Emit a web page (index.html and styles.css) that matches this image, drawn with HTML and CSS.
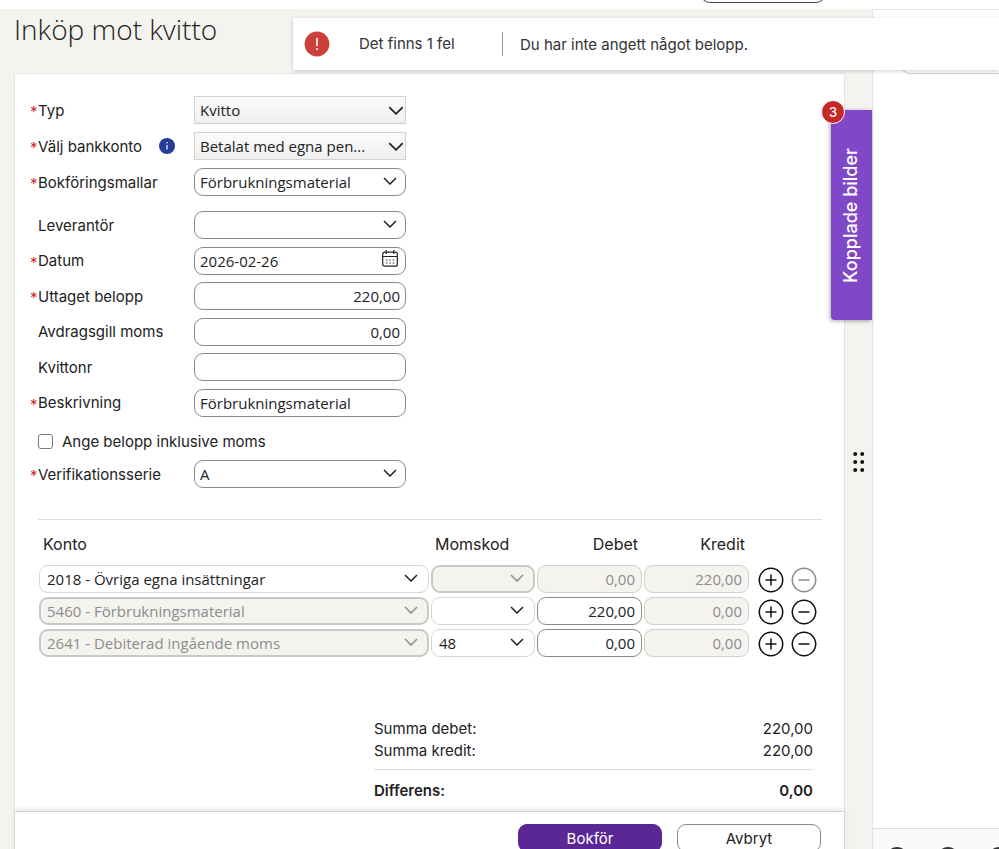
FILE: index.html
```html
<!DOCTYPE html>
<html lang="sv">
<head>
    <meta charset="UTF-8">
    <meta name="viewport" content="width=device-width, initial-scale=1.0">
    <title>Inköp mot kvitto</title>
    <link rel="stylesheet" href="styles.css">
</head>
<body>
    <!-- Shared icons -->
    <svg class="sprite" aria-hidden="true">
        <symbol id="chevron" viewBox="0 0 14 8"><path d="M1 1l6 6 6-6"/></symbol>
        <symbol id="plus" viewBox="0 0 26 26"><circle cx="13" cy="13" r="11.7"/><path d="M7.5 13h11M13 7.5v11"/></symbol>
        <symbol id="minus" viewBox="0 0 26 26"><circle cx="13" cy="13" r="11.7"/><path d="M7.5 13h11"/></symbol>
    </svg>

    <header class="topbar">
        <button class="topbar-btn" aria-label="Meny"></button>
    </header>

    <div class="alert" role="alert">
        <svg class="alert-icon" viewBox="0 0 26 26"><circle cx="13" cy="13" r="12.4" fill="#cc403b"/><path d="M13 7.5v7" stroke="#fff" stroke-width="1.6" stroke-linecap="round"/><circle cx="13" cy="18" r="1" fill="#fff"/></svg>
        <span class="alert-title">Det finns 1 fel</span>
        <span class="alert-text">Du har inte angett något belopp.</span>
    </div>

    <div class="layout">
        <main class="workspace">
            <h1>Inköp mot kvitto</h1>
            <form class="card">
                <div class="card-body">
                    <div class="fields">
                        <div class="row required">
                            <label for="typ">Typ</label>
                            <div class="select flat">
                                <select id="typ"><option>Kvitto</option></select>
                                <svg class="chevron"><use href="#chevron"/></svg>
                            </div>
                        </div>
                        <div class="row required">
                            <label for="bank">Välj bankkonto</label>
                            <svg class="info" viewBox="0 0 16 16"><circle cx="8" cy="8" r="8" fill="#263c96"/><path d="M8 7v4.5" stroke="#fff" stroke-width="1.2"/><circle cx="8" cy="4.8" r=".8" fill="#fff"/></svg>
                            <div class="select flat">
                                <select id="bank"><option>Betalat med egna pen...</option></select>
                                <svg class="chevron"><use href="#chevron"/></svg>
                            </div>
                        </div>
                        <div class="row required">
                            <label for="mall">Bokföringsmallar</label>
                            <div class="select">
                                <select id="mall"><option>Förbrukningsmaterial</option></select>
                                <svg class="chevron"><use href="#chevron"/></svg>
                            </div>
                        </div>
                    </div>

                    <div class="fields details">
                        <div class="row">
                            <label for="lev">Leverantör</label>
                            <div class="select">
                                <select id="lev"><option></option></select>
                                <svg class="chevron"><use href="#chevron"/></svg>
                            </div>
                        </div>
                        <div class="row required">
                            <label for="datum">Datum</label>
                            <div class="select">
                                <input type="text" id="datum" value="2026-02-26">
                                <svg class="calendar" viewBox="0 0 16 17"><rect x=".7" y="2.2" width="14.6" height="14" rx="2"/><path d="M.7 6.5h14.6M4.2 0v4M11.8 0v4"/><path d="M4 10h8.4M4 13h8.4" stroke-dasharray="1.4 2"/></svg>
                            </div>
                        </div>
                        <div class="row required">
                            <label for="uttag">Uttaget belopp</label>
                            <input type="text" id="uttag" class="amount" value="220,00">
                        </div>
                        <div class="row">
                            <label for="moms">Avdragsgill moms</label>
                            <input type="text" id="moms" class="amount" value="0,00">
                        </div>
                        <div class="row">
                            <label for="nr">Kvittonr</label>
                            <input type="text" id="nr">
                        </div>
                        <div class="row required">
                            <label for="beskr">Beskrivning</label>
                            <input type="text" id="beskr" value="Förbrukningsmaterial">
                        </div>
                    </div>

                    <div class="check">
                        <input type="checkbox" id="inkl">
                        <label for="inkl">Ange belopp inklusive moms</label>
                    </div>

                    <div class="row required">
                        <label for="serie">Verifikationsserie</label>
                        <div class="select">
                            <select id="serie"><option>A</option></select>
                            <svg class="chevron"><use href="#chevron"/></svg>
                        </div>
                    </div>

                    <table class="entries">
                        <colgroup>
                            <col>
                            <col class="col-code">
                            <col class="col-sum">
                            <col class="col-sum">
                            <col class="col-actions">
                        </colgroup>
                        <thead>
                            <tr>
                                <th>Konto</th>
                                <th>Momskod</th>
                                <th class="num">Debet</th>
                                <th class="num">Kredit</th>
                                <td></td>
                            </tr>
                        </thead>
                        <tbody>
                            <tr>
                                <td><div class="select"><select aria-label="Konto"><option>2018 - Övriga egna insättningar</option></select><svg class="chevron"><use href="#chevron"/></svg></div></td>
                                <td><div class="select"><select aria-label="Momskod" disabled><option></option></select><svg class="chevron"><use href="#chevron"/></svg></div></td>
                                <td><input type="text" class="amount" aria-label="Debet" value="0,00" disabled></td>
                                <td><input type="text" class="amount" aria-label="Kredit" value="220,00" disabled></td>
                                <td>
                                    <div class="actions">
                                        <button type="button" aria-label="Lägg till rad"><svg><use href="#plus"/></svg></button>
                                        <button type="button" aria-label="Ta bort rad" disabled><svg><use href="#minus"/></svg></button>
                                    </div>
                                </td>
                            </tr>
                            <tr>
                                <td><div class="select"><select aria-label="Konto" disabled><option>5460 - Förbrukningsmaterial</option></select><svg class="chevron"><use href="#chevron"/></svg></div></td>
                                <td><div class="select"><select aria-label="Momskod"><option></option></select><svg class="chevron"><use href="#chevron"/></svg></div></td>
                                <td><input type="text" class="amount" aria-label="Debet" value="220,00"></td>
                                <td><input type="text" class="amount" aria-label="Kredit" value="0,00" disabled></td>
                                <td>
                                    <div class="actions">
                                        <button type="button" aria-label="Lägg till rad"><svg><use href="#plus"/></svg></button>
                                        <button type="button" aria-label="Ta bort rad"><svg><use href="#minus"/></svg></button>
                                    </div>
                                </td>
                            </tr>
                            <tr>
                                <td><div class="select"><select aria-label="Konto" disabled><option>2641 - Debiterad ingående moms</option></select><svg class="chevron"><use href="#chevron"/></svg></div></td>
                                <td><div class="select"><select aria-label="Momskod"><option>48</option></select><svg class="chevron"><use href="#chevron"/></svg></div></td>
                                <td><input type="text" class="amount" aria-label="Debet" value="0,00"></td>
                                <td><input type="text" class="amount" aria-label="Kredit" value="0,00" disabled></td>
                                <td>
                                    <div class="actions">
                                        <button type="button" aria-label="Lägg till rad"><svg><use href="#plus"/></svg></button>
                                        <button type="button" aria-label="Ta bort rad"><svg><use href="#minus"/></svg></button>
                                    </div>
                                </td>
                            </tr>
                        </tbody>
                    </table>

                    <dl class="totals">
                        <div><dt>Summa debet:</dt><dd>220,00</dd></div>
                        <div><dt>Summa kredit:</dt><dd>220,00</dd></div>
                        <div class="diff"><dt>Differens:</dt><dd>0,00</dd></div>
                    </dl>
                </div>

                <div class="card-footer">
                    <button type="button" class="btn primary">Bokför</button>
                    <button type="button" class="btn">Avbryt</button>
                </div>
            </form>
        </main>

        <div class="gutter">
            <button class="side-tab"><span class="side-label">Kopplade bilder</span><span class="badge">3</span></button>
            <svg class="drag" viewBox="0 0 12 22"><circle cx="2.2" cy="3" r="2"/><circle cx="9.2" cy="3" r="2"/><circle cx="2.2" cy="11" r="2"/><circle cx="9.2" cy="11" r="2"/><circle cx="2.2" cy="19" r="2"/><circle cx="9.2" cy="19" r="2"/></svg>
        </div>

        <aside class="preview">
            <button class="preview-btn" aria-label="Välj bild"></button>
            <div class="preview-tools">
                <button aria-label="Zooma in"><svg viewBox="0 0 24 24"><circle cx="12" cy="12" r="10"/></svg></button>
                <button aria-label="Zooma ut"><svg viewBox="0 0 24 24"><circle cx="12" cy="12" r="10"/></svg></button>
                <button aria-label="Rotera"><svg viewBox="0 0 24 24"><circle cx="12" cy="12" r="10"/></svg></button>
            </div>
        </aside>
    </div>
</body>
</html>
```

FILE: styles.css
```css
* {
    box-sizing: border-box;
}

body {
    margin: 0;
    height: 100vh;
    overflow: hidden;
    display: flex;
    flex-direction: column;
    background: #f4f3ef;
    color: #222;
    font-family: 'Inter', sans-serif;
    font-size: 15px;
    position: relative;
}

button,
input,
select {
    font: inherit;
    color: inherit;
    margin: 0;
}

button {
    cursor: pointer;
}

svg {
    fill: none;
    stroke: none;
}

.sprite {
    position: absolute;
    width: 0;
    height: 0;
}

/* Top bar */
.topbar {
    flex: none;
    height: 9px;
    background: #fff;
    display: flex;
    align-items: flex-end;
    justify-content: flex-end;
    padding: 0 173px 6px 0;
}

.topbar-btn {
    width: 126px;
    height: 32px;
    border: 1px solid #444;
    border-radius: 10px;
    background: #fff;
}

/* Alert */
.alert {
    position: absolute;
    top: 18px;
    left: 293px;
    right: 0;
    z-index: 5;
    display: flex;
    align-items: center;
    padding: 13px 11px;
    background: #fff;
    box-shadow: 0 1px 4px rgba(0, 0, 0, 0.2);
    color: #333;
}

.alert-icon {
    width: 26px;
    height: 26px;
    margin-right: 29px;
}

.alert-title {
    width: 144px;
    line-height: 24px;
    border-right: 1px solid #999;
    margin-right: 17px;
}

/* Layout */
.layout {
    flex: 1;
    min-height: 0;
    display: flex;
}

.workspace {
    flex: 1;
    min-width: 0;
    padding-left: 14px;
}

h1 {
    margin: 0 0 24px;
    font-family: 'Open Sans', sans-serif;
    font-size: 28px;
    font-weight: 350;
    line-height: 40px;
}

.card {
    background: #fff;
    border: 1px solid #e4e4e4;
}

.card-body {
    padding: 22px 22px 9px 23px;
}

/* Form rows */
.fields {
    display: grid;
    gap: 8px;
    margin-bottom: 15px;
}

.details {
    gap: 0;
    align-content: space-between;
    min-height: 206px;
}

.row {
    position: relative;
    display: grid;
    grid-template-columns: 1fr auto 212px;
    align-items: center;
    width: 368px;
}

.row > :last-child {
    grid-column: 3;
}

.required::before {
    content: '*';
    position: absolute;
    left: -8px;
    top: 6px;
    color: #d02c2c;
}

.info {
    width: 16px;
    height: 16px;
    margin-right: 19px;
}

.select {
    position: relative;
}

input[type="text"],
select {
    display: block;
    width: 100%;
    height: 28px;
    padding: 0 5px;
    border: 1px solid #8a8a8a;
    border-radius: 9px;
    background: #fff;
    font-family: 'Open Sans', sans-serif;
    appearance: none;
    outline: none;
}

input.amount {
    text-align: right;
}

.chevron {
    position: absolute;
    right: 9px;
    top: 9px;
    width: 14px;
    height: 8px;
    stroke: #222;
    stroke-width: 1.5;
    pointer-events: none;
}

.flat select {
    border-color: #d0d0d0;
    border-radius: 0;
    background: linear-gradient(#fbfbfb, #efefef);
}

.flat .chevron {
    right: 2px;
    top: 10px;
    width: 16px;
    height: 9px;
}

.calendar {
    position: absolute;
    right: 8px;
    top: 3px;
    width: 16px;
    height: 17px;
    stroke: #222;
    stroke-width: 1.2;
}

.check {
    display: flex;
    align-items: center;
    gap: 9px;
    height: 18px;
    margin-bottom: 10px;
}

.check input {
    width: 15px;
    height: 15px;
    border: 1px solid #777;
    border-radius: 3px;
    background: #fff;
    appearance: none;
}

/* Entry table */
.entries {
    width: 100%;
    margin-top: 31px;
    border-top: 1px solid #ddd;
    border-spacing: 0;
    table-layout: fixed;
}

.col-code {
    width: 106px;
}

.col-sum {
    width: 107px;
}

.col-actions {
    width: 72px;
}

.entries th {
    height: 43px;
    padding: 5px 5px 0;
    font-size: 16px;
    font-weight: 400;
    text-align: left;
}

.entries th.num {
    text-align: right;
}

.entries td {
    padding: 2px 1px;
}

.entries select {
    padding: 0 7px;
    border-color: #d6d6d6;
}

.entries input.amount {
    padding: 0 6px;
}

.entries .chevron {
    right: 11px;
}

.entries select:disabled,
.entries input:disabled {
    background: #f4f3ef;
    color: #8c8c8c;
    opacity: 1;
    border-color: #d0cfcc;
}

.entries select:disabled {
    border: 2px solid #c9c8c4;
    padding: 0 6px;
}

select:disabled + .chevron {
    stroke: #8c8c8c;
}

.actions {
    display: flex;
    gap: 7px;
    padding: 2px 0 0 7px;
}

.actions button {
    width: 26px;
    height: 26px;
    padding: 0;
    border: 0;
    background: none;
}

.actions svg {
    display: block;
    width: 26px;
    height: 26px;
    stroke: #111;
    stroke-width: 1.5;
}

.actions button:disabled svg {
    stroke: #8c8c8c;
}

/* Totals */
.totals {
    width: 439px;
    margin: 59px 9px 0 auto;
    line-height: 22px;
}

.totals div {
    display: flex;
    justify-content: space-between;
}

.totals dd {
    margin: 0;
}

.totals .diff {
    margin-top: 7px;
    padding-top: 10px;
    border-top: 1px solid #ddd;
    font-weight: 600;
}

.card-footer {
    display: flex;
    justify-content: flex-end;
    gap: 15px;
    padding: 12px 23px;
    border-top: 1px solid #d4d4d4;
    box-shadow: 0 -2px 5px rgba(0, 0, 0, 0.1);
}

.btn {
    width: 144px;
    height: 28px;
    padding: 0;
    border: 1px solid #8a8a8a;
    border-radius: 9px;
    background: #fff;
}

.btn.primary {
    border-color: #5a2795;
    background: #5a2795;
    color: #fff;
}

/* Gutter with tab and drag handle */
.gutter {
    position: relative;
    flex: none;
    width: 27px;
    padding: 442px 0 0 8px;
}

.drag {
    display: block;
    width: 12px;
    height: 22px;
    fill: #111;
}

.side-tab {
    position: absolute;
    top: 101px;
    right: 0;
    display: flex;
    align-items: center;
    justify-content: center;
    width: 41px;
    height: 210px;
    padding: 0 3px 0 0;
    border: 0;
    border-radius: 4px 0 0 4px;
    background: #8048c8;
    color: #fff;
    font-size: 18px;
    font-weight: 500;
    box-shadow: -1px 1px 4px rgba(0, 0, 0, 0.35);
}

.side-label {
    writing-mode: vertical-rl;
    transform: rotate(180deg);
}

.badge {
    position: absolute;
    top: -10px;
    left: -10px;
    width: 24px;
    height: 24px;
    border: 1px solid #fff;
    border-radius: 50%;
    background: #c62828;
    font-size: 13px;
    line-height: 22px;
    text-align: center;
}

/* Preview panel */
.preview {
    flex: none;
    width: 127px;
    display: flex;
    flex-direction: column;
    justify-content: space-between;
    overflow: hidden;
    padding-top: 34px;
    border-left: 1px solid #e2e2e2;
    border-top: 1px solid #e2e2e2;
    background: #fff;
}

.preview-btn {
    width: 160px;
    height: 30px;
    margin-left: 27px;
    border: 1px solid #ccc;
    border-radius: 10px;
    background: #fff;
}

.preview-tools {
    display: flex;
    gap: 27px;
    height: 21px;
    padding: 17px 0 0 12px;
    border-top: 1px solid #ddd;
    background: #fafafa;
}

.preview-tools button {
    flex: none;
    width: 24px;
    height: 24px;
    padding: 0;
    border: 0;
    background: none;
}

.preview-tools svg {
    display: block;
    stroke: #333;
    stroke-width: 2;
}
```
